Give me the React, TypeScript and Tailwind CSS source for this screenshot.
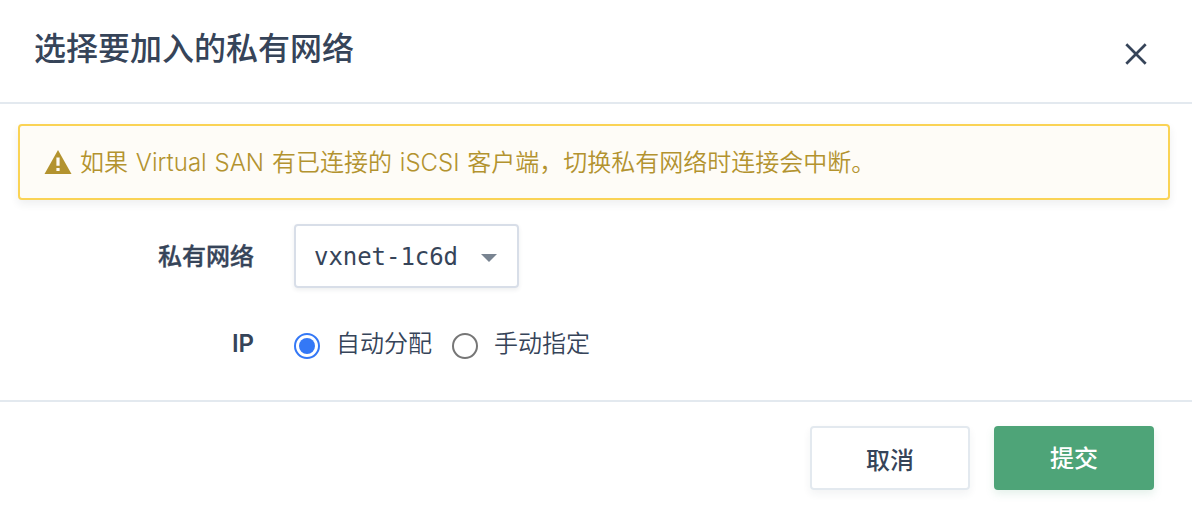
import { useState } from "react";

const options = ["自动分配", "手动指定"];

export default function App() {
  const [mode, setMode] = useState(0);
  return (
    <div className="flex h-[508px] w-[1192px] flex-col bg-white font-['Inter','Noto_Sans_CJK_SC',sans-serif] text-2xl text-[#364459]">
      <header className="flex h-[104px] items-start justify-between border-b-2 border-[#e3e9ef] pl-[34px] pr-[45px]">
        <h1 className="mt-[25px] text-[32px] leading-[48px] font-medium">选择要加入的私有网络</h1>
        <button aria-label="关闭" className="mt-[43px]">
          <svg width="22" height="22" viewBox="0 0 22 22" stroke="#364459" strokeWidth="2.7" fill="none">
            <path d="M1.3 1.3 20.7 20.7M20.7 1.3 1.3 20.7" />
          </svg>
        </button>
      </header>

      <main className="h-[296px] pt-5">
        <div className="ml-[18px] flex h-[76px] w-[1152px] items-center rounded-[4px] border-2 border-[#fad355] bg-[#fefcf7] pl-6 text-[#b3932f] shadow-[0_4px_8px_rgba(36,46,66,0.08)]">
          <svg width="28" height="24" viewBox="0 0 28 24" className="mr-2 mb-px">
            <path d="M14 0 27.5 24H.5Z" fill="#b3932f" />
            <path d="M12.4 7.5h3.2v8.3h-3.2ZM12.4 18h3.2v3h-3.2Z" fill="#fefcf7" />
          </svg>
          <p className="mt-0.5 leading-9 font-[350] whitespace-pre [word-spacing:1.1px]">如果 Virtual SAN 有已连接的 iSCSI 客户端，切换私有网络时连接会中断。</p>
        </div>

        <div className="mt-6 flex h-16">
          <div className="w-[254px] pt-px text-right leading-[64px] font-medium [-webkit-text-stroke:0.4px]">私有网络</div>
          <button className="ml-10 flex w-[225px] items-center rounded-[4px] border-2 border-[#d8dee8] pl-[18px] shadow-[0_2px_4px_rgba(36,46,66,0.08)]">
            <span className="w-36 pt-0.5 font-['DejaVu_Sans_Mono',monospace] tracking-[-0.05px] whitespace-nowrap">vxnet-1c6d</span>
            <svg width="16" height="8" viewBox="0 0 16 8" className="mt-[3px] ml-[23px]">
              <path d="M0 0h16L8 8Z" fill="#798491" />
            </svg>
          </button>
        </div>

        <div className="mt-9 flex h-10 items-center">
          <div className="w-[254px] text-right leading-10 font-semibold">IP</div>
          <div className="ml-10 flex gap-5">
            {options.map((label, i) => (
              <label key={label} className="flex items-center gap-4 font-[350]">
                <input type="radio" name="ip" checked={mode === i} onChange={() => setMode(i)} className="peer sr-only" />
                <span className="mt-1 flex size-[26px] items-center justify-center rounded-full border-2 border-[#767676] peer-checked:border-[#3478f6]">
                  {mode === i && <span className="size-4 rounded-full bg-[#3478f6]" />}
                </span>
                <span className="leading-10">{label}</span>
              </label>
            ))}
          </div>
        </div>
      </main>

      <footer className="flex flex-1 justify-end gap-6 border-t-2 border-[#e3e9ef] pt-6 pr-[38px] font-medium">
        <button className="h-16 w-40 rounded-[4px] border-2 border-[#e3e9ef] pt-1.5 shadow-[0_4px_8px_rgba(36,46,66,0.06)]">取消</button>
        <button className="h-16 w-40 rounded-[4px] bg-[#4ea478] pt-0.5 text-white shadow-[0_4px_8px_rgba(78,164,120,0.15)]">提交</button>
      </footer>
    </div>
  );
}
